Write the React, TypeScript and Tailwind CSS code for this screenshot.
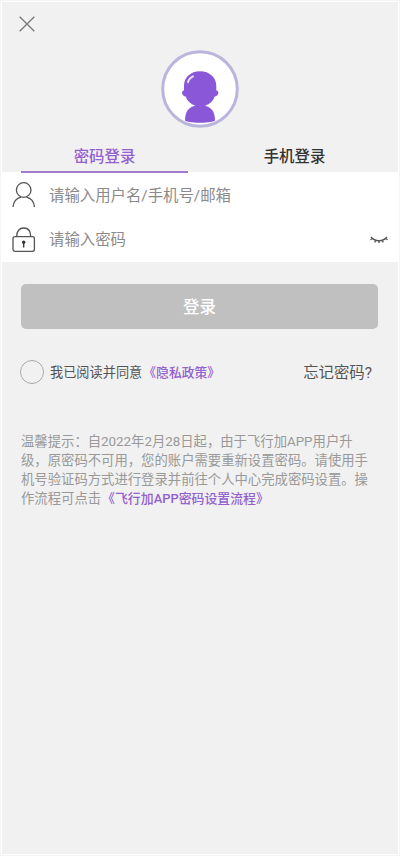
import React from "react";

const FONT = "font-['Roboto','Noto_Sans_CJK_SC',sans-serif]";

const tips = [
  "温馨提示：自2022年2月28日起，由于飞行加APP用户升",
  "级，原密码不可用，您的账户需要重新设置密码。请使用手",
  "机号验证码方式进行登录并前往个人中心完成密码设置。操",
];

function Avatar() {
  return (
    <svg className="block h-[80px] w-[80px]" viewBox="0 0 80 80" aria-hidden="true">
      <circle cx="40" cy="40" r="37.3" fill="#fff" stroke="#bab5dd" strokeWidth="3" />
      <g fill="#8a57d9">
        <path d="M40 22.200c-9.500 0-16 6.300-16 14.500v4.800c-1.600.2-2.200 1.300-1.900 2.800.4 2 1.700 3.200 3.600 3.200 1.500 4 4.500 7.500 9.600 9.200v2h10v-2c5-1.700 8-5.200 9.400-9.200 1.900 0 3.200-1.200 3.600-3.200.3-1.500-.3-2.600-2-2.800v-4.800c0-8.200-6.700-14.500-16.300-14.500z" />
        <path d="M34.500 57c-5.500 1.200-9.500 5.500-9.500 14.700 7.500 2.800 22.500 2.800 30 0 0-9.200-4-13.500-9.500-14.700z" />
      </g>
      <path d="M28 33.300c.6-2.800 2.300-4.800 5-6" fill="none" stroke="#efe4ff" strokeWidth="1.900" strokeLinecap="round" />
    </svg>
  );
}

export default function App() {
  return (
    <main className={`h-[856px] w-[400px] bg-[#f5f5f5] p-px text-[#333] ${FONT}`}>
      <div className="h-full overflow-hidden border border-white bg-[#f1f1f1]">
        <header className="flex h-[47px] pl-[17px] pt-[14px]">
          <svg className="h-4 w-4" viewBox="0 0 16 16" aria-label="关闭">
            <path d="M.7.7l14.600 14.600M15.300.7L.7 15.300" stroke="#777" strokeWidth="1.300" fill="none" />
          </svg>
        </header>
        <div className="flex h-[82px] justify-center">
          <Avatar />
        </div>
        <nav className="flex h-[41px] px-[19px] text-[15.400px] font-medium">
          <div className="relative flex h-[42px] w-[167px] items-center justify-center border-b-2 border-[#a27ccb] pt-[13px] text-[#9560cf]">密码登录</div>
          <div className="flex flex-1 items-center justify-center pl-[22px] pt-[12px]">手机登录</div>
        </nav>
        <section className="h-[90px] bg-white text-[15.400px] text-[#8b8b8b]">
          <div className="flex h-[45px] items-center pl-[10px]">
            <svg className="h-[26px] w-6" viewBox="0 0 24 26" fill="none" stroke="#555" strokeWidth="1.300">
              <circle cx="11.700" cy="8" r="7.300" />
              <path d="M1 25c.6-5.500 4-9 8-9.900M22.500 25c-.6-5.500-4-9-8-9.900" />
            </svg>
            <span className="ml-[13px] pt-[4px]">请输入用户名/手机号/邮箱</span>
          </div>
          <div className="flex h-[45px] items-center pl-[10px]">
            <svg className="h-[26px] w-6" viewBox="0 0 24 26" fill="none" stroke="#555" strokeWidth="1.300">
              <rect x="1" y="9.700" width="21.400" height="14.600" rx="2" />
              <path d="M4.700 9.500c0-5.300 2.700-8.500 7-8.500s7 3.200 7 8.500" />
              <circle cx="11.700" cy="15.200" r="1.700" fill="#333" stroke="none" />
              <path d="M11.700 16v4.500" stroke="#333" />
            </svg>
            <span className="ml-[13px] pt-[3px]">请输入密码</span>
            <svg className="ml-auto mr-[9px] h-[10px] w-5" viewBox="0 0 20 10" fill="none" stroke="#555" strokeWidth="1.400">
              <path d="M2 2c4 5 12 5 16 0M3.500 3.200L1.500 4.700M7 5L5.700 7.300M10 5.500V8M13 5l1.300 2.300M16.500 3.200l2 1.500" />
            </svg>
          </div>
        </section>
        <button className="mx-[19px] mt-[22px] flex h-[45px] w-[357px] items-center justify-center rounded-[5px] bg-[#c0c0c0] pt-[3px] text-[16.500px] font-medium text-white">登录</button>
        <div className="ml-[18px] mr-[26px] mt-[30px] flex h-[26px] items-center whitespace-nowrap text-[13.200px]">
          <span className="h-6 w-6 rounded-full border-[1.500px] border-[#aaa]" />
          <span className="ml-[6px] pt-px text-[#555]">我已阅读并同意</span>
          <span className="ml-px pt-px text-[12.800px] font-medium text-[#9260cf]">《隐私政策》</span>
          <span className="ml-auto pt-[3px] text-[15.400px] text-[#555]">忘记密码?</span>
        </div>
        <div className="ml-[19px] mt-[47px] whitespace-nowrap text-[13.350px] leading-[19px] text-[#999]">
          {tips.map((line) => (
            <p key={line}>{line}</p>
          ))}
          <p>
            作流程可点击<span className="ml-px text-[12.900px] font-medium text-[#9260cf]">《飞行加APP密码设置流程》</span>
          </p>
        </div>
      </div>
    </main>
  );
}
